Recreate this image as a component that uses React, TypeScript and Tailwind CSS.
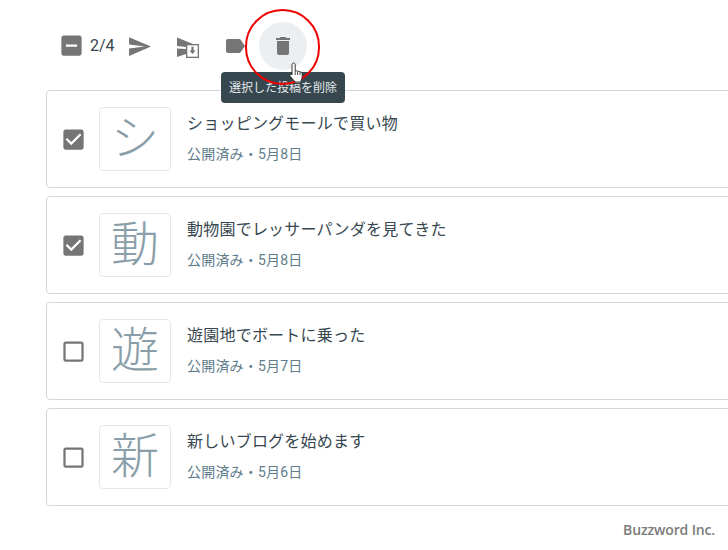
import React from "react";

const posts = [
  { glyph: "シ", title: "ショッピングモールで買い物", date: "公開済み・5月8日", checked: true },
  { glyph: "動", title: "動物園でレッサーパンダを見てきた", date: "公開済み・5月8日", checked: true },
  { glyph: "遊", title: "遊園地でボートに乗った", date: "公開済み・5月7日", checked: false },
  { glyph: "新", title: "新しいブログを始めます", date: "公開済み・5月6日", checked: false },
];

const Checkbox = ({ checked }: { checked: boolean }) => (
  <svg width="27" height="27" viewBox="0 0 24 24" className="shrink-0 fill-[#757575]">
    {checked ? (
      <path d="M19 3H5c-1.1 0-2 .9-2 2v14c0 1.1.9 2 2 2h14c1.1 0 2-.9 2-2V5c0-1.1-.9-2-2-2zm-9 14l-5-5 1.41-1.41L10 14.17l7.59-7.59L19 8l-9 9z" />
    ) : (
      <path d="M19 5v14H5V5h14m0-2H5c-1.1 0-2 .9-2 2v14c0 1.1.9 2 2 2h14c1.1 0 2-.9 2-2V5c0-1.1-.9-2-2-2z" />
    )}
  </svg>
);

const PostRow = ({ glyph, title, date, checked }: (typeof posts)[number]) => (
  <div className="flex h-[98px] w-[700px] shrink-0 items-center rounded border border-[#cfd8dc] bg-white pl-[13px]">
    <Checkbox checked={checked} />
    <div className="ml-[12px] flex h-16 w-[72px] shrink-0 items-center justify-center rounded border border-[#e4e7e9] text-[48px] font-light leading-none text-[#8a9ea9]">
      {glyph}
    </div>
    <div className="ml-4 flex flex-col pb-[2px]">
      <div className="text-[16px] leading-[22px] tracking-[0.22px] text-[#37474f]">{title}</div>
      <div className="mt-[9px] text-[14px] leading-5 tracking-[0.2px] text-[#607d8b]">{date}</div>
    </div>
  </div>
);

export default function App() {
  return (
    <div className="relative h-[550px] w-[728px] overflow-hidden bg-white font-['Roboto','Noto_Sans_CJK_JP',sans-serif]">
      <div className="flex h-[90px] items-center pt-[2px] pl-[58px]">
        <svg width="27" height="27" viewBox="0 0 24 24" className="-translate-y-px fill-[#757575]">
          <path d="M19 3H5c-1.1 0-2 .9-2 2v14c0 1.1.9 2 2 2h14c1.1 0 2-.9 2-2V5c0-1.1-.9-2-2-2zm-2 10H7v-2h10v2z" />
        </svg>
        <span className="ml-[5px] text-[16px] text-[#37474f]">2/4</span>
        <svg width="25" height="25" viewBox="0 0 24 24" className="ml-[12px] fill-[#757575]">
          <path d="M2.01 21L23 12 2.01 3 2 10l15 2-15 2z" />
        </svg>
        <svg width="24" height="24" viewBox="0 0 24 24" className="ml-[24px] fill-[#757575]">
          <path d="M1 3.500L17 10H10v3l-9-1z" />
          <path d="M1 14.500l9 .5v5l-9 3z" />
          <path d="M10 10h13v14H10z" />
          <path d="M11.300 11.300h10.400v11.400H11.300z" className="fill-white" />
          <path d="M15.400 12.800h2.200v3.700h2L16.500 20l-3.100-3.500h2z" />
        </svg>
        <svg width="24" height="24" viewBox="0 0 24 24" className="ml-[23px] fill-[#757575]">
          <path d="M17.63 5.84C17.27 5.33 16.67 5 16 5L5 5.010C3.900 5.010 3 5.900 3 7v10c0 1.100.9 1.990 2 1.990L16 19c.67 0 1.270-.33 1.630-.84L22 12l-4.370-6.160z" />
        </svg>
        <div className="ml-[12px] flex h-12 w-12 items-center justify-center rounded-full bg-[#eceff1]">
          <svg width="24" height="24" viewBox="0 0 24 24" className="fill-[#757575]">
            <path d="M6 19c0 1.100.9 2 2 2h8c1.100 0 2-.9 2-2V7H6v12zM19 4h-3.500l-1-1h-5l-1 1H5v2h14V4z" />
          </svg>
        </div>
      </div>

      <div className="ml-[46px] flex flex-col gap-2">
        {posts.map((p) => (
          <PostRow key={p.title} {...p} />
        ))}
      </div>

      <div className="mt-[14px] pr-[13px] text-right font-['Open_Sans',sans-serif] text-[14px] font-semibold leading-5 tracking-[-0.15px] text-[#7b7b7b]">
        Buzzword Inc.
      </div>

      {/* tooltip, highlight ring and pointer lie over the page */}
      <div className="absolute left-[221px] top-[72px] flex h-[31px] w-[124px] items-center justify-center rounded-sm bg-[#37474f] text-[12px] text-[#e3e7e9]">
        選択した投稿を削除
      </div>
      <div className="absolute left-[245px] top-[9px] h-[76px] w-[75px] rounded-full border-2 border-[#f00000]" />
      <svg width="16" height="22" viewBox="0 0 16 22" className="absolute left-[289px] top-[62px]">
        <path
          d="M3 3c0-1.200.7-2 1.600-2s1.600.8 1.600 2v6c1-.5 2-.3 2.400.4 1-.5 2-.2 2.400.6.900-.3 1.800.1 2 1 .5 2 .3 4.500-.5 6.500l-.7 2.500H6L1.500 14.500c-.7-1-.7-1.800-.2-2.200.6-.4 1.200-.1 1.700.7z"
          className="fill-white stroke-[#222222]"
          strokeWidth="0.9"
        />
        <path d="M6.200 9v4M8.600 9.400V13M11 10v3" className="fill-none stroke-[#222222]" strokeWidth="0.8" />
      </svg>
    </div>
  );
}
